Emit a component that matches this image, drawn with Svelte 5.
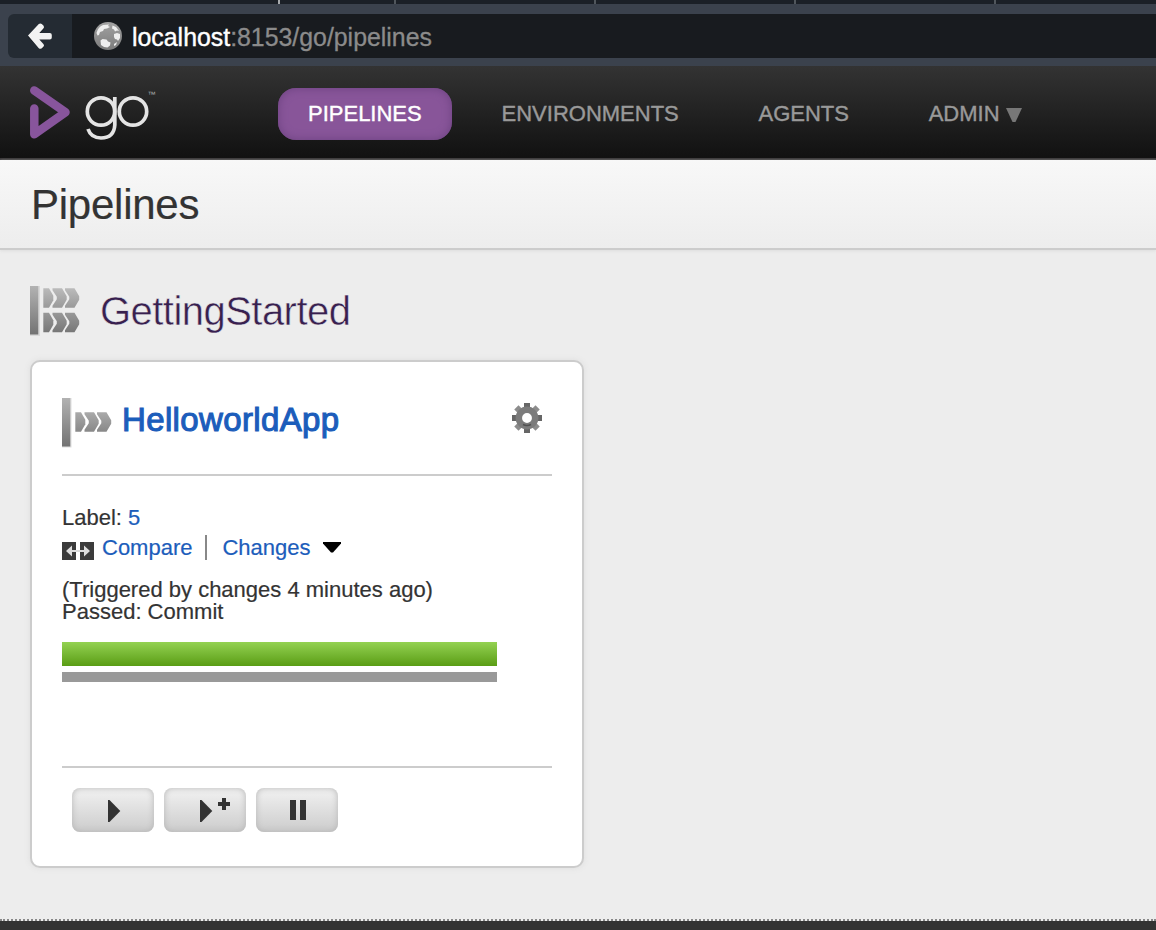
<script>
  const nav = ['ENVIRONMENTS', 'AGENTS'];
  const tabs = [278, 394, 594, 794, 994];
  const teeth = [0, 45, 90, 135, 180, 225, 270, 315];
</script>

{#snippet chevrons(y, fill)}
  <g transform="translate(13 {y})" {fill}>
    <path d="M.3 0h5.700L10.300 7.500v4.500L6 19.500H.300z" />
    <path d="M9.500 0h9.500l4.700 8v3.500l-4.700 8H9.500v-2l4.300-6.500v-2.500L9.500 2z" />
    <path d="M22 0h9.500l4.700 8v3.500l-4.700 8H22v-2l4.300-6.500v-2.500L22 2z" />
  </g>
{/snippet}

{#snippet play()}
  <path d="M0 0h1.500L12.300 11 1.500 22H0z" fill="#333" />
{/snippet}

<div class="page">
  <div class="tabs">
    {#each tabs as x}
      <i class:active={x === 278} style="left:{x}px"></i>
    {/each}
  </div>
  <div class="toolbar">
    <button class="back" aria-label="Back">
      <svg width="26" height="30" viewBox="0 0 26 30">
        <path d="M14 6 5 15l9 9M6 15h15.500" fill="none" stroke="#0c0f12" stroke-width="6" stroke-linecap="round" transform="translate(0 1)" opacity=".5" />
        <path d="M1 14.600 11.800 3.100q1.500-1.300 3 0l1.800 1.600q1 1.500-.2 2.700L12.300 12.100h10.500q2 0 2 2v2.500q0 2-2 2H12.300l4.100 4.300q1.200 1.300.2 2.700l-1.800 1.600q-1.500 1.300-3 0z" fill="#f2f2f2" />
      </svg>
    </button>
    <div class="url">
      <svg width="28" height="28" viewBox="0 0 28 28">
        <defs>
          <linearGradient id="globe" x2="0" y2="1"><stop stop-color="#a2a2a2" /><stop offset="1" stop-color="#7c7c7c" /></linearGradient>
        </defs>
        <circle cx="14" cy="14" r="14" fill="url(#globe)" />
        <path d="M2.500 11Q4 5 9 3l6-.5-1 1.500 2 1-3 1.500-3 .5-1 2-3 1-1 3-1.500.5zM18.500 3.500 22 5l3 4-2-.5-2 1-1-2-2-1zM20 12l3-1 3 1v4l-2 3-1-1.500-2-.5-1-2zM6.500 18.500l2-1.500 4 .5 1.500 2 2.500 1-.5 3-2.500 2-3.500-.5-3-2zM20 22l3-2-1 3-2 1z" fill="#eee" />
      </svg>
      <span><b>localhost</b>:8153/go/pipelines</span>
    </div>
  </div>

  <header>
    <svg class="logo" width="126" height="56" viewBox="0 0 126 56">
      <path d="M4.300 4.500 35.500 26.300 4.300 48.200V22.500" fill="none" stroke="#88559c" stroke-width="8.500" stroke-linecap="round" stroke-linejoin="round" />
      <g fill="none" stroke="#e4e4e4" stroke-width="3.700">
        <circle cx="71" cy="25.500" r="13.700" />
        <circle cx="103" cy="25.500" r="13.700" />
        <path d="M84.800 11v28Q84 52 71 52 61 52 58 43" />
      </g>
      <text x="117.500" y="11" font-size="8" fill="#aaa">™</text>
    </svg>
    <nav>
      <a class="active" href="#p">PIPELINES</a>
      {#each nav as item}<a href="#n">{item}</a>{/each}
      <a href="#a">ADMIN<svg width="16" height="14" viewBox="0 0 16 14"><path d="M0 0h16L9.500 14h-3z" fill="#777" /></svg></a>
    </nav>
  </header>

  <div class="title"><h1>Pipelines</h1></div>

  <main>
    <div class="group">
      <svg width="54" height="52" viewBox="0 0 54 52">
        <defs>
          <linearGradient id="bar" x2="0" y2="1"><stop stop-color="#b2b2b2" /><stop offset="1" stop-color="#737373" /></linearGradient>
          <linearGradient id="top" x2="0" y2="1"><stop stop-color="#bbb" /><stop offset="1" stop-color="#999" /></linearGradient>
          <linearGradient id="low" x2="0" y2="1"><stop stop-color="#989898" /><stop offset="1" stop-color="#777" /></linearGradient>
        </defs>
        <path d="M0 1h10v50H0z" fill="#d9d9d9" />
        <path d="M0 1h8.300v48.500H0z" fill="url(#bar)" />
        {@render chevrons(3.3, 'url(#top)')}
        {@render chevrons(27.8, 'url(#low)')}
      </svg>
      <h2>GettingStarted</h2>
    </div>

    <section class="card">
      <div class="head">
        <svg width="54" height="52" viewBox="0 0 54 52">
          <defs><linearGradient id="mid" x2="0" y2="1"><stop stop-color="#aaa" /><stop offset="1" stop-color="#888" /></linearGradient></defs>
          <path d="M0 1h9.500v49.500H0z" fill="#ddd" />
          <path d="M0 1h8.300v48.500H0z" fill="url(#bar)" />
          {@render chevrons(15.3, 'url(#mid)')}
        </svg>
        <h3>HelloworldApp</h3>
        <svg class="gear" width="30" height="30" viewBox="-15 -15 30 30">
          {#each teeth as angle}
            <rect x="-3" y="-15" width="6" height="7" transform="rotate({angle})" fill={angle % 90 ? '#8c8c8c' : '#666'} />
          {/each}
          <circle r="8.200" fill="none" stroke="#7b7b7b" stroke-width="6.500" />
          <path d="M-4 6.500q4 2 8 0" fill="none" stroke="#505050" stroke-width="1.500" />
        </svg>
      </div>

      <div class="info">
        <p>Label: <a href="#5">5</a></p>
        <div class="links">
          <svg width="32" height="18" viewBox="0 0 32 18">
            <path d="M0 0h14v18H0zM18 0h14v18H18z" fill="#3b3b3b" />
            <path d="M4 9 10 3.500V8h12V3.500L28 9l-6 5.500V10H10v4.500z" fill="#ddd" />
          </svg>
          <a href="#c">Compare</a>
          <i></i>
          <a href="#h">Changes</a>
          <svg class="caret" width="18" height="11" viewBox="0 0 18 11"><path d="M0 0h18v1.500L10 10.500H8L0 1.500z" /></svg>
        </div>
        <p class="trigger">(Triggered by changes 4 minutes ago)</p>
        <p class="result">Passed: Commit</p>
        <div class="stage"></div>
        <div class="shade"></div>
      </div>

      <div class="actions">
        <button aria-label="Trigger"><svg width="82" height="44"><g transform="translate(36 12)">{@render play()}</g></svg></button>
        <button aria-label="Trigger with options"><svg width="82" height="44"><g transform="translate(36 12)">{@render play()}</g><path d="M58 10h4v4h4v4h-4v4h-4v-4h-4v-4h4z" fill="#333" /></svg></button>
        <button aria-label="Pause"><svg width="82" height="44"><path d="M34 12h6v20h-6zM44 12h6v20h-6z" fill="#333" /></svg></button>
      </div>
    </section>
  </main>
  <footer></footer>
</div>

<style>
  :global(body) { margin: 0; }
  .page {
    box-sizing: border-box; width: 1156px; height: 930px; overflow: hidden;
    display: flex; flex-direction: column;
    background: #ededed; color: #333;
    font-family: "Liberation Sans", Arial, sans-serif; font-size: 22px;
  }
  .page :is(h1, h2, h3, p) { margin: 0; font-weight: 400; }
  a { text-decoration: none; color: #1c5dbb; }
  svg { display: block; flex: none; }
  button { border: 0; padding: 0; }

  .tabs { position: relative; flex: none; height: 4px; background: #1b2027; }
  .tabs i { position: absolute; top: 0; width: 1.500px; height: 4px; background: #50565c; }
  .tabs i.active { background: #a8abae; }
  .toolbar { flex: none; box-sizing: border-box; height: 62px; padding: 10px 0 8px 8px; display: flex; background: #3b424d; }
  .back { width: 64px; display: flex; align-items: center; justify-content: center; background: #242b33; border-radius: 6px 0 0 6px; }
  .url { flex: 1; display: flex; align-items: center; gap: 10px; padding-left: 22px; background: #181b1f; color: #8b8b8b; font-size: 24.860px; }
  .url span { padding-top: 3px; -webkit-text-stroke: .3px #8b8b8b; }
  .url b { font-weight: 400; color: #fff; -webkit-text-stroke: .4px #fff; }

  header { flex: none; box-sizing: border-box; height: 94px; border-bottom: 2px solid #373536; padding-left: 30px; display: flex; align-items: flex-start; background: linear-gradient(#333, #111); }
  .logo { margin-top: 20px; }
  nav { display: flex; margin: 22px 0 0 122px; gap: 20px; }
  nav a { height: 52px; line-height: 51px; padding: 0 29.850px; display: flex; border-radius: 18px; color: #999; -webkit-text-stroke: .4px #999; }
  nav a.active { padding: 0 30px; color: #fff; -webkit-text-stroke: .4px #fff; background: #885599; box-shadow: inset 0 0 10px #6c4281; }
  nav svg { margin: 20px 0 0 6px; }

  .title { flex: none; height: 88px; border-bottom: 2px solid #ccc; padding-left: 31px; background: linear-gradient(#f8f8f8, #ededed); box-shadow: 0 1px 3px #ddd; }
  .title h1 { font-size: 42px; line-height: 90px; letter-spacing: -.250px; -webkit-text-stroke: .2px #333; }

  main { flex: 1; padding: 35px 30px 0; }
  .group { height: 75px; display: flex; gap: 16px; }
  h2 { font-size: 40px; line-height: 53px; letter-spacing: -.540px; color: #38204f; -webkit-text-stroke: .5px #ededed; }
  .card { box-sizing: border-box; width: 554px; height: 508px; padding: 35px 30px 0; border: 2px solid #ccc; border-radius: 10px; background: #fff; box-shadow: 0 0 6px #ddd; }
  .head { height: 77px; border-bottom: 2px solid #ccc; display: flex; }
  .head h3 { margin-left: 6px; font-size: 33px; line-height: 46px; letter-spacing: .360px; color: #1c5dbb; -webkit-text-stroke: 1.100px #1c5dbb; }
  .gear { margin: 6px 10px 0 auto; }
  .info { height: 290px; border-bottom: 2px solid #ccc; }
  .info p, .links a { -webkit-text-stroke: .2px currentColor; }
  .info p { padding-top: 29px; line-height: 25px; }
  .links { display: flex; align-items: center; height: 34px; padding-top: 1px; }
  .links svg { margin: 5px 8px 0 0; }
  .links i { width: 2px; height: 25px; margin: -2px 15px 0 13px; background: #888; }
  .links a { margin-top: -1px; }
  .links .caret { margin: -2px 0 0 12px; }
  .info .trigger { padding-top: 14px; line-height: 22px; }
  .info .result { padding-top: 0; line-height: 22px; }
  .stage { width: 435px; height: 24px; margin-top: 19px; background: linear-gradient(#94d252, #5a9d15); }
  .shade { width: 435px; height: 10px; margin-top: 6px; background: #999; }
  .actions { display: flex; gap: 10px; padding: 20px 10px; }
  .actions button { width: 82px; height: 44px; border-radius: 8px; background: linear-gradient(#f2f2f2, #ccc); box-shadow: inset 0 0 6px #b5b5b5; }
  footer { flex: none; height: 9px; border-top: 2px dotted #888; background: #333; background-clip: padding-box; }
</style>
